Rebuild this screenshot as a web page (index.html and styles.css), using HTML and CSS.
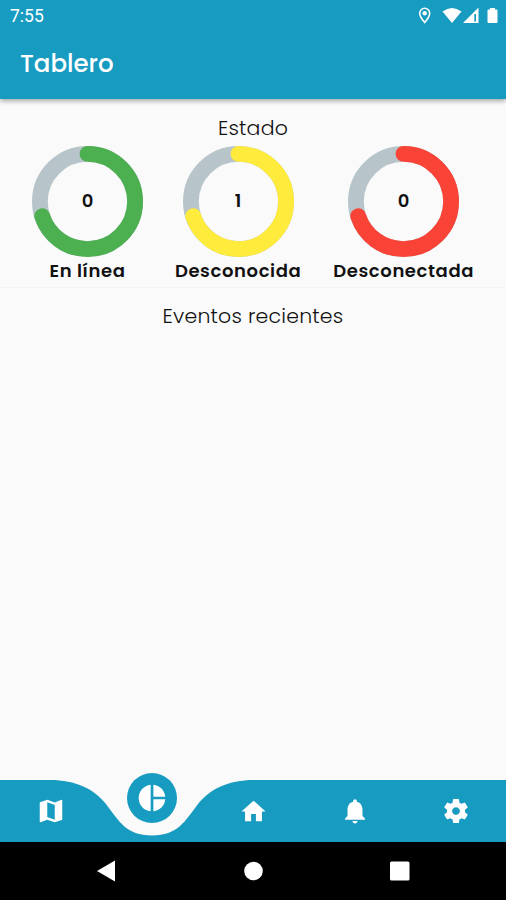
FILE: index.html
```html
<!DOCTYPE html>
<html lang="es">
<head>
    <meta charset="UTF-8">
    <meta name="viewport" content="width=device-width, initial-scale=1.0">
    <title>Tablero</title>
    <link rel="stylesheet" href="styles.css">
</head>
<body>
    <header class="app-header">
        <div class="status-bar">
            <span class="clock">7:55</span>
            <svg class="status-icons" width="82" height="20" viewBox="0 0 82 20" fill="#fff">
                <path d="M8.700 3.300a5 5 0 0 0-5 5c0 3.500 5 9.200 5 9.200s5-5.700 5-9.200a5 5 0 0 0-5-5z" fill="none" stroke="#fff" stroke-width="1.600"/>
                <circle cx="8.700" cy="8.300" r="2.200"/>
                <path d="M26.500 6.500Q36 -.5 45.500 6.500L36 18z"/>
                <path d="M62.500 2.500V18H47z"/>
                <path d="M58.300 9h1.700v7.500h-1.700z" fill="#179bc1"/>
                <path d="M74 3h5v1.500h1.500q1 0 1 1V17q0 1-1 1h-8q-1 0-1-1V5.500q0-1 1-1h1.500z"/>
            </svg>
        </div>
        <h1 class="title">Tablero</h1>
    </header>

    <main class="content">
        <section class="status">
            <h2 class="section-title">Estado</h2>
            <div class="gauges">
                <div class="gauge">
                    <div class="ring">
                        <svg width="111" height="111" viewBox="0 0 111 111">
                            <circle class="track" cx="55.5" cy="55.5" r="47.6"/>
                            <circle class="arc green" cx="55.5" cy="55.5" r="47.6" pathLength="100"/>
                        </svg>
                        <span class="value">0</span>
                    </div>
                    <span class="label">En línea</span>
                </div>
                <div class="gauge">
                    <div class="ring">
                        <svg width="111" height="111" viewBox="0 0 111 111">
                            <circle class="track" cx="55.5" cy="55.5" r="47.6"/>
                            <circle class="arc yellow" cx="55.5" cy="55.5" r="47.6" pathLength="100"/>
                        </svg>
                        <span class="value">1</span>
                    </div>
                    <span class="label">Desconocida</span>
                </div>
                <div class="gauge">
                    <div class="ring">
                        <svg width="111" height="111" viewBox="0 0 111 111">
                            <circle class="track" cx="55.5" cy="55.5" r="47.6"/>
                            <circle class="arc red" cx="55.5" cy="55.5" r="47.6" pathLength="100"/>
                        </svg>
                        <span class="value">0</span>
                    </div>
                    <span class="label">Desconectada</span>
                </div>
            </div>
        </section>
        <section class="events">
            <h2 class="section-title">Eventos recientes</h2>
        </section>
    </main>

    <nav class="tab-bar">
        <svg class="tab-shape" width="506" height="62" viewBox="0 0 506 62">
            <path d="M0 0H50C76 0 94 9 106 24C119 41 126 55.500 152 55.500C178 55.500 185 41 198 24C210 9 228 0 254 0H506V62H0z" fill="#179bc1"/>
        </svg>
        <a class="tab">
            <svg width="30" height="30" viewBox="0 0 24 24"><path d="M20.500 3l-.16.030L15 5.100 9 3 3.360 4.900c-.21.070-.36.250-.36.480V20.500c0 .28.220.5.500.5l.16-.030L9 18.900l6 2.100 5.640-1.900c.21-.070.360-.250.360-.480V3.500c0-.28-.220-.5-.5-.5zM15 19l-6-2.110V5l6 2.110V19z"/></svg>
        </a>
        <a class="tab active">
            <span class="bubble">
                <svg width="32" height="32" viewBox="0 0 24 24"><path d="M11 2v20c-5.070-.5-9-4.790-9-10s3.930-9.500 9-10zm2.030 0v8.990H22c-.470-4.740-4.240-8.520-8.970-8.990zm0 11.010V22c4.740-.470 8.500-4.250 8.970-8.990h-8.970z"/></svg>
            </span>
        </a>
        <a class="tab">
            <svg width="29" height="29" viewBox="0 0 24 24"><path d="M10 20v-6h4v6h5v-8h3L12 3 2 12h3v8z"/></svg>
        </a>
        <a class="tab">
            <svg width="30" height="30" viewBox="0 0 24 24"><path d="M12 22c1.100 0 2-.9 2-2h-4c0 1.100.9 2 2 2zm6-6v-5c0-3.070-1.630-5.640-4.500-6.320V4c0-.83-.67-1.500-1.500-1.500s-1.500.67-1.500 1.500v.68C7.640 5.360 6 7.920 6 11v5l-2 2v1h16v-1l-2-2z"/></svg>
        </a>
        <a class="tab">
            <svg width="30" height="30" viewBox="0 0 24 24"><path d="M19.140 12.940c.040-.3.060-.61.060-.94 0-.32-.020-.64-.070-.94l2.030-1.580c.18-.14.230-.41.120-.61l-1.920-3.320c-.12-.22-.37-.29-.59-.22l-2.390.96c-.5-.38-1.030-.7-1.620-.94l-.36-2.540c-.040-.24-.24-.41-.48-.41h-3.840c-.24 0-.43.170-.47.410l-.36 2.540c-.59.240-1.130.570-1.620.940l-2.390-.96c-.22-.080-.47 0-.59.220L2.740 8.870c-.12.210-.080.470.120.610l2.030 1.580c-.050.300-.090.630-.090.940s.020.640.070.940l-2.030 1.580c-.18.140-.23.410-.12.610l1.920 3.320c.12.220.37.290.59.220l2.390-.96c.5.380 1.030.700 1.620.940l.36 2.540c.050.240.240.410.480.410h3.840c.24 0 .44-.17.470-.41l.36-2.540c.59-.24 1.130-.56 1.620-.94l2.390.96c.22.080.47 0 .59-.22l1.920-3.320c.12-.22.070-.47-.12-.61l-2.010-1.580zM12 15.100c-1.710 0-3.100-1.390-3.100-3.100s1.390-3.100 3.100-3.100 3.100 1.390 3.100 3.100-1.390 3.100-3.100 3.100z"/></svg>
        </a>
    </nav>

    <footer class="system-nav">
        <svg width="20" height="22" viewBox="0 0 20 22"><path d="M19 .5v21L1 11z"/></svg>
        <svg width="20" height="22" viewBox="0 0 20 22"><circle cx="10.500" cy="11" r="9.300"/></svg>
        <svg width="20" height="22" viewBox="0 0 20 22"><rect y="1.500" width="19.500" height="19" rx="1.500"/></svg>
    </footer>
</body>
</html>
```
FILE: styles.css
```css
* {
    box-sizing: border-box;
}
body {
    margin: 0;
    height: 100vh;
    display: flex;
    flex-direction: column;
    overflow: hidden;
    background-color: #fafafa;
    color: #111;
    font-family: Poppins, Inter, sans-serif;
    font-feature-settings: "cv11";
}
svg {
    display: block;
}
.app-header {
    height: 99px;
    background-color: #179bc1;
    color: #fff;
    box-shadow: 0 2px 5px rgba(0, 0, 0, 0.35);
}
.status-bar {
    height: 32px;
    display: flex;
    justify-content: space-between;
    padding: 5px 8px 0 10px;
}
.clock {
    font-family: Roboto, sans-serif;
    font-size: 17.5px;
    line-height: 22px;
}
.title {
    margin: 13px 0 0 20px;
    font-size: 24.5px;
    line-height: 37px;
    font-weight: 500;
}
.content {
    flex: 1;
}
.status {
    height: 189px;
    padding-top: 13px;
    border-bottom: 1px solid #f4f4f4;
}
.section-title {
    margin: 0;
    font-size: 20.5px;
    line-height: 32px;
    font-weight: 300;
    letter-spacing: 0.2px;
    text-align: center;
}
.gauges {
    display: flex;
    justify-content: space-evenly;
    margin-top: 2px;
}
.gauge {
    display: flex;
    flex-direction: column;
    align-items: center;
}
.ring {
    display: grid;
    place-items: center;
}
.ring > * {
    grid-area: 1 / 1;
}
.track,
.arc {
    fill: none;
    stroke-width: 15.8;
}
.track {
    stroke: #b7c5ca;
}
.arc {
    stroke-linecap: round;
    stroke-dasharray: 70 100;
    transform: rotate(-90deg);
    transform-origin: center;
}
.green {
    stroke: #4caf50;
}
.yellow {
    stroke: #ffeb3b;
}
.red {
    stroke: #f94336;
}
.value {
    padding-bottom: 2px;
    font-size: 18px;
    font-weight: 600;
}
.label {
    font-size: 18px;
    line-height: 28px;
    font-weight: 600;
    letter-spacing: 0.6px;
}
.events {
    padding-top: 12px;
}
.tab-bar {
    position: relative;
    height: 62px;
    display: flex;
}
.tab-shape {
    position: absolute;
    top: 0;
    left: 0;
}
.tab {
    position: relative;
    flex: 1;
    display: flex;
    justify-content: center;
    align-items: center;
    padding-left: 1px;
    fill: #fff;
}
.tab.active {
    align-items: flex-start;
}
.bubble {
    width: 50px;
    height: 50px;
    flex: none;
    display: grid;
    place-items: center;
    margin-top: -7px;
    border-radius: 50%;
    background-color: #179bc1;
}
.system-nav {
    height: 58px;
    display: flex;
    justify-content: center;
    align-items: center;
    gap: 127px;
    background-color: #000;
    fill: #fff;
}
```
